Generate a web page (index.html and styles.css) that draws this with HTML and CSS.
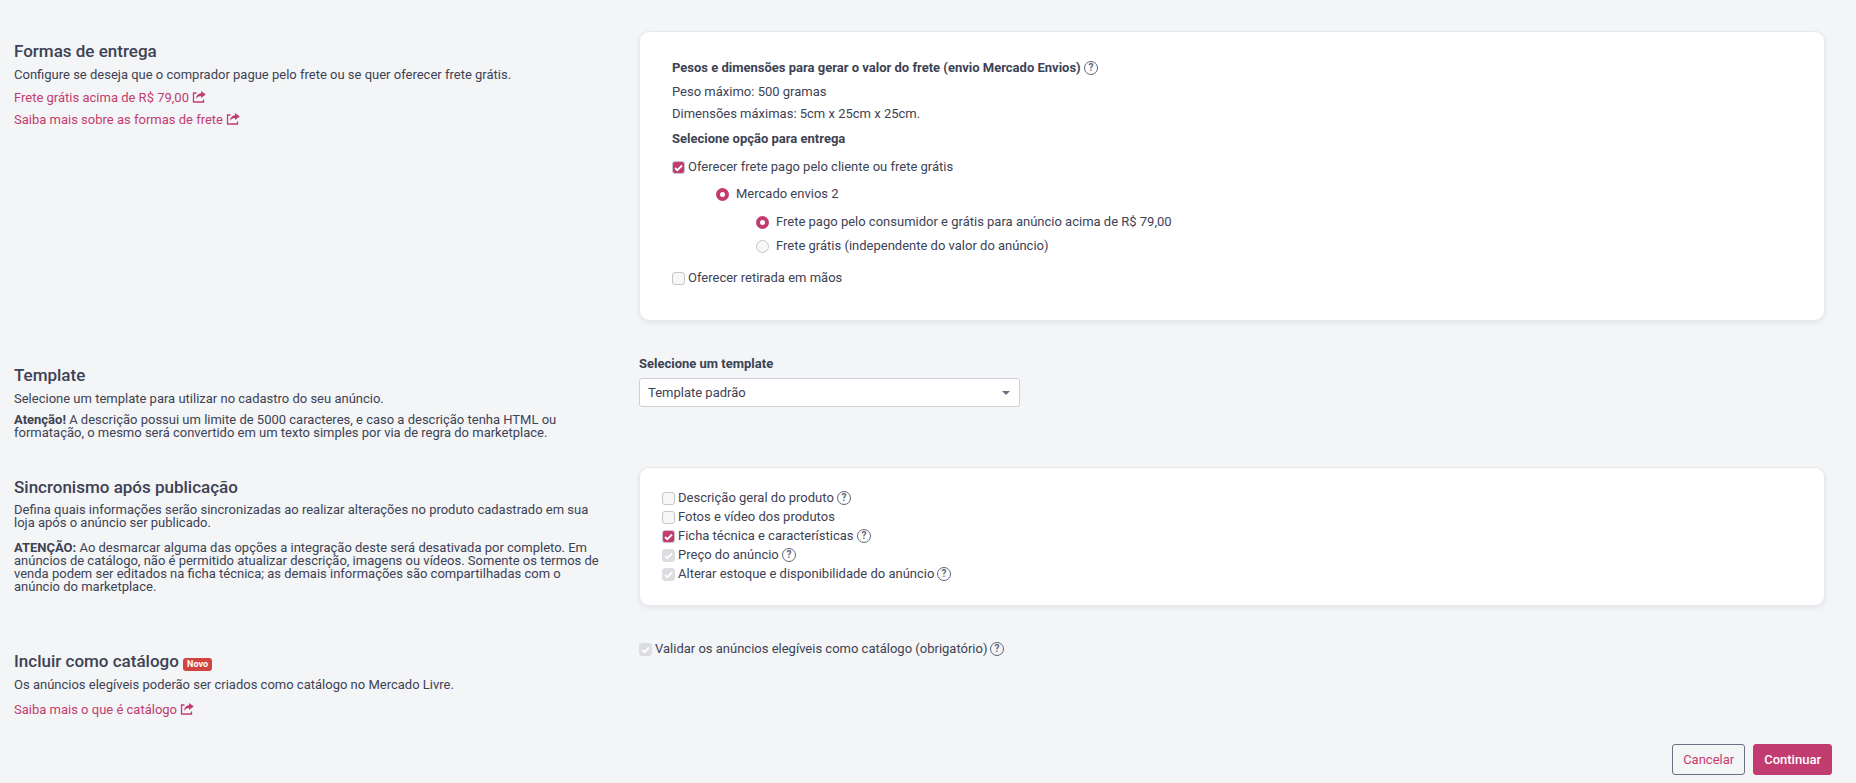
FILE: index.html
```html
<!DOCTYPE html>
<html lang="pt-BR">
<head>
<meta charset="utf-8">
<title>Configurações do anúncio</title>
<link rel="stylesheet" href="styles.css">
</head>
<body>
<svg class="sprite" aria-hidden="true">
  <symbol id="share" viewBox="0 0 14 12">
    <path d="M4.500 2H1.500v9h10V8.500" fill="none" stroke="currentColor" stroke-width="1.300"/>
    <path d="M9 0l4.800 3.500L9 7V4.900C6.500 4.900 5.300 5.800 4 8 4.200 4.500 6 2.400 9 2.200z" fill="currentColor"/>
  </symbol>
  <symbol id="help" viewBox="0 0 14 14">
    <circle cx="7" cy="7" r="6.500" fill="none" stroke="currentColor" stroke-width="1"/>
    <text x="7" y="10.200" text-anchor="middle" class="help-mark">?</text>
  </symbol>
</svg>
<form class="page">
  <section class="row row-delivery">
    <div class="info">
      <h2>Formas de entrega</h2>
      <p>Configure se deseja que o comprador pague pelo frete ou se quer oferecer frete grátis.</p>
      <p class="link"><a href="#">Frete grátis acima de R$ 79,00 <svg class="share"><use href="#share"/></svg></a></p>
      <p class="link"><a href="#">Saiba mais sobre as formas de frete <svg class="share"><use href="#share"/></svg></a></p>
    </div>
    <div class="card delivery">
      <div class="line strong">Pesos e dimensões para gerar o valor do frete (envio Mercado Envios) <svg class="help"><use href="#help"/></svg></div>
      <div class="line weight">Peso máximo: 500 gramas</div>
      <div class="line">Dimensões máximas: 5cm x 25cm x 25cm.</div>
      <div class="line strong choose">Selecione opção para entrega</div>
      <label class="line option"><input type="checkbox" checked>Oferecer frete pago pelo cliente ou frete grátis</label>
      <label class="line option level-1"><input type="radio" name="envio" checked>Mercado envios 2</label>
      <div class="level-2">
        <label class="line option"><input type="radio" name="frete" checked>Frete pago pelo consumidor e grátis para anúncio acima de R$ 79,00</label>
        <label class="line option"><input type="radio" name="frete">Frete grátis (independente do valor do anúncio)</label>
      </div>
      <label class="line option pickup"><input type="checkbox">Oferecer retirada em mãos</label>
    </div>
  </section>

  <section class="row row-template">
    <div class="info">
      <h2>Template</h2>
      <p>Selecione um template para utilizar no cadastro do seu anúncio.</p>
      <p class="note"><b>Atenção!</b> A descrição possui um limite de 5000 caracteres, e caso a descrição tenha HTML ou formatação, o mesmo será convertido em um texto simples por via de regra do marketplace.</p>
    </div>
    <div class="field">
      <label class="strong" for="template">Selecione um template</label>
      <div class="select">
        <select id="template"><option>Template padrão</option></select>
      </div>
    </div>
  </section>

  <section class="row row-sync">
    <div class="info">
      <h2>Sincronismo após publicação</h2>
      <p>Defina quais informações serão sincronizadas ao realizar alterações no produto cadastrado em sua loja após o anúncio ser publicado.</p>
      <p class="far"><b>ATENÇÃO:</b> Ao desmarcar alguma das opções a integração deste será desativada por completo. Em anúncios de catálogo, não é permitido atualizar descrição, imagens ou vídeos. Somente os termos de venda podem ser editados na ficha técnica; as demais informações são compartilhadas com o anúncio do marketplace.</p>
    </div>
    <div class="card sync">
      <label class="option"><input type="checkbox">Descrição geral do produto <svg class="help"><use href="#help"/></svg></label>
      <label class="option"><input type="checkbox">Fotos e vídeo dos produtos</label>
      <label class="option"><input type="checkbox" checked>Ficha técnica e características <svg class="help"><use href="#help"/></svg></label>
      <label class="option"><input type="checkbox" checked disabled>Preço do anúncio <svg class="help"><use href="#help"/></svg></label>
      <label class="option"><input type="checkbox" checked disabled>Alterar estoque e disponibilidade do anúncio <svg class="help"><use href="#help"/></svg></label>
    </div>
  </section>

  <section class="row row-catalog">
    <div class="info">
      <h2>Incluir como catálogo <span class="badge">Novo</span></h2>
      <p>Os anúncios elegíveis poderão ser criados como catálogo no Mercado Livre.</p>
      <p class="far"><a href="#">Saiba mais o que é catálogo <svg class="share"><use href="#share"/></svg></a></p>
    </div>
    <div>
      <label class="line option"><input type="checkbox" checked disabled>Validar os anúncios elegíveis como catálogo (obrigatório) <svg class="help"><use href="#help"/></svg></label>
    </div>
  </section>

  <footer class="actions">
    <button type="button" class="btn">Cancelar</button>
    <button type="submit" class="btn btn-primary">Continuar</button>
  </footer>
</form>
</body>
</html>
```

FILE: styles.css
```css
* { box-sizing: border-box; }

body {
  margin: 0;
  background: #f3f5f7;
  color: #3d4254;
  font: 13px/13px Roboto, "Liberation Sans", sans-serif;
}

.sprite { display: none; }

.page { padding: 31px 24px 8px 14px; }

.row {
  display: grid;
  grid-template-columns: minmax(0, 1fr) minmax(0, 2fr);
  column-gap: 32px;
  align-items: start;
  margin-right: 7px;
}

.row-template { margin-top: 36px; }
.row-sync { margin-top: 28px; }
.row-catalog { margin-top: 33px; }

.info { padding-top: 10px; }
.row-template .info { padding-top: 8px; }
.row-catalog .info { padding-top: 12px; }

h2 {
  margin: 0 0 7px;
  font-size: 17px;
  line-height: 20px;
  font-weight: 500;
}

.row-sync h2 { margin-bottom: 6px; }

p { margin: 0; }
.link { margin-top: 10px; }
.link + .link { margin-top: 9px; }
.note { margin-top: 8px; }
.far { margin-top: 12px; }

a { color: #c23c70; text-decoration: none; }

b, .strong { font-weight: 700; }

.share { width: 14px; height: 12px; vertical-align: -1px; }

.help {
  width: 14px;
  height: 14px;
  margin-left: 3px;
  flex: none;
  vertical-align: -3px;
  overflow: visible;
  color: #5f6477;
}

.strong .help { margin-left: 0; }

.help-mark {
  font: 700 10px Roboto, sans-serif;
  fill: currentColor;
}

.badge {
  display: inline-block;
  padding: 0 4px;
  border-radius: 3px;
  background: #d14541;
  color: #fff;
  font-size: 9px;
  line-height: 13px;
  font-weight: 700;
}

.card {
  background: #fff;
  border: 1px solid #e6e8eb;
  border-radius: 10px;
  box-shadow: 0 2px 5px rgba(40, 50, 70, 0.08);
}

.delivery { padding: 26px 32px 32px; }
.sync { padding: 20px 22px 22px; }

.line { line-height: 20px; }
.weight { margin: 4px 0 2px; }
.choose { margin: 5px 0 8px; }

.option {
  display: flex;
  align-items: center;
  width: fit-content;
}

.sync .option { line-height: 19px; }

.level-1 { margin: 7px 0 8px 44px; }
.level-2 { display: grid; row-gap: 4px; margin-left: 84px; }
.pickup { margin-top: 12px; }

input {
  appearance: none;
  flex: none;
  width: 13px;
  height: 13px;
  margin: 1px 3px 0 0;
  border: 1px solid #c6c6c8;
  background: #f7f7f7 center / 11px 11px no-repeat;
}

input[type="checkbox"] { border-radius: 3px; }

input[type="checkbox"]:checked {
  background-color: #c23c70;
  background-image: url("data:image/svg+xml,%3Csvg xmlns='http://www.w3.org/2000/svg' viewBox='0 0 11 11'%3E%3Cpath d='M2 6l2.300 2.200L9 3.500' fill='none' stroke='white' stroke-width='1.800'/%3E%3C/svg%3E");
}

input[type="checkbox"]:checked:disabled {
  border-color: #dcdde0;
  background-color: #dcdde0;
}

input[type="radio"] {
  margin-right: 7px;
  border-radius: 50%;
}

input[type="radio"]:checked { border: 4px solid #c23c70; background: #fff; }

.field { display: grid; row-gap: 8px; }

.select { position: relative; width: 32.1%; }

.select select {
  appearance: none;
  display: block;
  width: 100%;
  height: 29px;
  padding: 0 28px 0 8px;
  border: 1px solid #cdd0d8;
  border-radius: 3px;
  background: #fff;
  color: inherit;
  font: inherit;
}

.select::after {
  content: "";
  position: absolute;
  top: 13px;
  right: 10px;
  border: 4px solid transparent;
  border-top-color: #6b7085;
  border-bottom: 0;
  pointer-events: none;
}

.actions {
  display: flex;
  justify-content: flex-end;
  gap: 8px;
  margin-top: 28px;
}

.btn {
  height: 31px;
  padding: 0 10px;
  border: 1px solid #6b7085;
  border-radius: 3px;
  background: transparent;
  color: #c23c70;
  font: 13px/20px Roboto, sans-serif;
}

.btn-primary {
  border-color: #c23c70;
  background: #c23c70;
  color: #fff;
  font-weight: 500;
}
```
